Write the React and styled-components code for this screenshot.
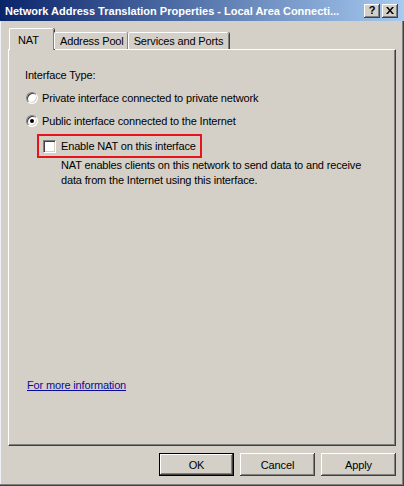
import React from 'react'
import styled, { createGlobalStyle } from 'styled-components'

const GlobalStyle = createGlobalStyle`
    html, body {
        margin: 0;
        padding: 0;
        background: #d4d0c8;
    }
    body {
        font-family: "Liberation Sans", Arial, sans-serif;
        font-size: 11px;
        letter-spacing: -0.15px;
        color: #000;
    }
`

const raised = `
    box-shadow: inset -1px -1px #404040, inset 1px 1px #fff, inset -2px -2px #808080;
`

const App = () => {
    return (
        <>
            <GlobalStyle />
            <Window>
                <TitleBar>
                    <TitleText>Network Address Translation Properties - Local Area Connecti...</TitleText>
                    <CaptionButtons>
                        <CaptionButton>?</CaptionButton>
                        <CaptionButton>
                            <svg width="8" height="7" viewBox="0 0 8 7">
                                <path d="M0 0h2l2 2.5L6 0h2L5 3.5 8 7H6L4 4.5 2 7H0l3-3.5z" fill="#000" />
                            </svg>
                        </CaptionButton>
                    </CaptionButtons>
                </TitleBar>

                <Body>
                    <TabRow>
                        <Tab $active $width={45}>NAT</Tab>
                        <Tab $width={73}>Address Pool</Tab>
                        <Tab $width={101}>Services and Ports</Tab>
                    </TabRow>

                    <Panel>
                        <SectionLabel>Interface Type:</SectionLabel>

                        <RadioRow>
                            <Radio />
                            <span>Private interface connected to private network</span>
                        </RadioRow>
                        <RadioRow>
                            <Radio $checked />
                            <span>Public interface connected to the Internet</span>
                        </RadioRow>

                        <Highlight>
                            <Checkbox />
                            <span>Enable NAT on this interface</span>
                        </Highlight>
                        <Description>
                            NAT enables clients on this network to send data to and receive<br />
                            data from the Internet using this interface.
                        </Description>

                        <MoreInfo href="#">For more information</MoreInfo>
                    </Panel>

                    <ButtonRow>
                        <Button $default>OK</Button>
                        <Button>Cancel</Button>
                        <Button>Apply</Button>
                    </ButtonRow>
                </Body>
            </Window>
        </>
    )
}

export default App

const Window = styled.div`
    width: 404px;
    height: 486px;
    box-sizing: border-box;
    background: #d4d0c8;
    display: flex;
    flex-direction: column;
    box-shadow: inset -1px -1px #404040, inset -2px -2px #808080, inset 1px 0 #eef2f8;
    overflow: hidden;
`

const TitleBar = styled.div`
    height: 21px;
    flex-shrink: 0;
    display: flex;
    align-items: center;
    padding: 0 6px 0 5px;
    background: linear-gradient(to right, #0a246a, #a6caf0);
    gap: 4px;
`

const TitleText = styled.div`
    flex: 1;
    min-width: 0;
    color: #fff;
    font-weight: bold;
    font-size: 11px;
    letter-spacing: 0;
    white-space: nowrap;
    overflow: hidden;
    padding-top: 1px;
`

const CaptionButtons = styled.div`
    display: flex;
    gap: 2px;
`

const CaptionButton = styled.div`
    width: 16px;
    height: 14px;
    box-sizing: border-box;
    background: #d4d0c8;
    ${raised}
    display: flex;
    align-items: center;
    justify-content: center;
    font-weight: bold;
    font-size: 11px;
    line-height: 1;
    padding-bottom: 1px;
`

const Body = styled.div`
    flex: 1;
    display: flex;
    flex-direction: column;
    padding: 7px 8px 0 8px;
`

const TabRow = styled.div`
    display: flex;
    align-items: flex-end;
    height: 21px;
    padding-left: 1px;
    position: relative;
    z-index: 1;
`

const Tab = styled.div`
    box-sizing: border-box;
    min-width: ${p => p.$width}px;
    height: ${p => (p.$active ? 22 : 17)}px;
    margin-bottom: ${p => (p.$active ? -1 : 0)}px;
    padding: ${p => (p.$active ? '5px 0 0 8px' : '2px 4px 0 5px')};
    background: #d4d0c8;
    border-top: 1px solid #fff;
    border-left: 1px solid #fff;
    border-top-left-radius: 2px;
    border-top-right-radius: 2px;
    box-shadow: inset -1px 0 #808080, 1px 0 #404040;
    white-space: nowrap;
    line-height: 13px;
`

const Panel = styled.div`
    box-sizing: border-box;
    height: 397px;
    display: flex;
    flex-direction: column;
    padding: 18px 0 53px 16px;
    border-top: 1px solid #fff;
    border-left: 1px solid #fff;
    border-right: 1px solid #404040;
    border-bottom: 1px solid #404040;
    box-shadow: inset -1px -1px #808080;
`

const SectionLabel = styled.div`
    line-height: 14px;
`

const RadioRow = styled.div`
    display: flex;
    align-items: center;
    gap: 4px;
    height: 14px;
    margin-top: 9px;
`

const Radio = styled.span`
    position: relative;
    width: 12px;
    height: 12px;
    box-sizing: border-box;
    border-radius: 50%;
    background: #fff;
    border: 1px solid;
    border-color: #808080 #fff #fff #808080;
    box-shadow: inset 1px 1px #404040, inset -1px -1px #d4d0c8;
    margin-left: 1px;

    &::after {
        content: '';
        display: ${p => (p.$checked ? 'block' : 'none')};
        position: absolute;
        left: 3px;
        top: 3px;
        width: 4px;
        height: 4px;
        border-radius: 50%;
        background: #000;
    }
`

const Highlight = styled.div`
    box-sizing: border-box;
    width: 165px;
    height: 24px;
    margin: 6px 0 0 12px;
    border: 2px solid #e8141b;
    display: flex;
    align-items: center;
    gap: 5px;
    padding-left: 4px;
`

const Checkbox = styled.span`
    width: 13px;
    height: 13px;
    box-sizing: border-box;
    background: #fff;
    border: 1px solid;
    border-color: #808080 #fff #fff #808080;
    box-shadow: inset 1px 1px #404040, inset -1px -1px #d4d0c8;
`

const Description = styled.div`
    margin-left: 36px;
    line-height: 15px;
`

const MoreInfo = styled.a`
    margin-top: auto;
    margin-left: 2px;
    align-self: flex-start;
    color: #0a0a9c;
    text-decoration: underline;
    line-height: 14px;
`

const ButtonRow = styled.div`
    display: flex;
    justify-content: flex-end;
    gap: 6px;
    margin-top: 7px;
`

const Button = styled.button`
    width: 75px;
    height: 23px;
    box-sizing: border-box;
    padding: 0;
    font-family: "Liberation Sans", Arial, sans-serif;
    font-size: 11px;
    letter-spacing: -0.15px;
    color: #000;
    background: #d4d0c8;
    border: ${p => (p.$default ? '1px solid #000' : 'none')};
    box-shadow: inset -1px -1px #404040, inset 1px 1px #fff, inset -2px -2px #808080;
`
